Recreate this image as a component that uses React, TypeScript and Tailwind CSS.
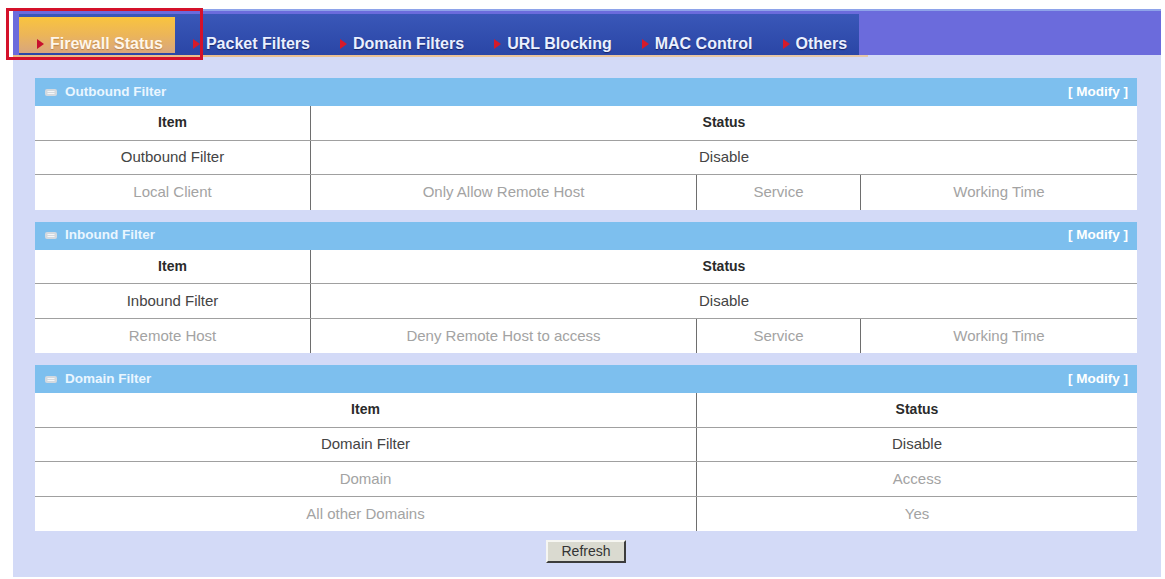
import React from "react";

const Marker = ({ active }: { active?: boolean }) => (
  <svg width="7" height="10" viewBox="0 0 7 10" className="mb-[4px] shrink-0">
    <polygon points="0,0 7,5 0,10" fill={active ? "#c8102e" : "#d61a2a"} />
  </svg>
);

const tabs = ["Firewall Status", "Packet Filters", "Domain Filters", "URL Blocking", "MAC Control", "Others"];

const SectionHeader = ({ title }: { title: string }) => (
  <div className="h-[28px] bg-[#7dbfee] flex items-center justify-between pl-[10px] pr-[9px]">
    <div className="flex items-center gap-[8px]">
      <svg width="12" height="7" viewBox="0 0 12 7">
        <rect x="0" y="0" width="12" height="7" rx="2" fill="#d3d9df" />
        <line x1="2.5" y1="2.5" x2="9.5" y2="2.5" stroke="#f4f6f8" strokeWidth="1" />
        <line x1="2.5" y1="4.5" x2="9.5" y2="4.5" stroke="#f4f6f8" strokeWidth="1" />
      </svg>
      <span className="text-[13.5px] font-bold text-[#eaf6ff]">{title}</span>
    </div>
    <span className="text-[13.5px] font-bold text-white">[ Modify ]</span>
  </div>
);

const rowCls = "h-[34.5px] grid border-b border-[#a0a0a0]";
const lastRowCls = "h-[34.5px] grid";
const cell = "flex items-center justify-center";
const vl = "border-l border-[#6e6e6e]";

const FilterTable = ({ name, a, b }: { name: string; a: string; b: string }) => (
  <div className="bg-white">
    <div className={`${rowCls} grid-cols-[275px_1fr]`}>
      <div className={`${cell} font-bold text-[14px] text-[#2a2a2a]`}>Item</div>
      <div className={`${cell} ${vl} font-bold text-[14px] text-[#2a2a2a]`}>Status</div>
    </div>
    <div className={`${rowCls} grid-cols-[275px_1fr]`}>
      <div className={`${cell} text-[15px] text-[#444]`}>{name}</div>
      <div className={`${cell} ${vl} text-[15px] text-[#444]`}>Disable</div>
    </div>
    <div className={`${lastRowCls} grid-cols-[275px_386px_164px_1fr] text-[15px] text-[#a3a3a3]`}>
      <div className={cell}>{a}</div>
      <div className={`${cell} ${vl}`}>{b}</div>
      <div className={`${cell} ${vl}`}>Service</div>
      <div className={`${cell} ${vl}`}>Working Time</div>
    </div>
  </div>
);

export default function App() {
  return (
    <div className="w-[1165px] h-[579px] bg-white relative overflow-hidden font-['Liberation_Sans',Arial,sans-serif]">
      <div className="pt-[9px] pl-[13px] pr-[4px]">
        <div className="bg-[#d3daf7] h-[568px] flex flex-col">
          {/* top bar */}
          <div className="h-[46px] bg-[#6b6bdc] border-t-2 border-[#8ea3ea] flex items-end">
            <div className="ml-[6px] h-[41px] bg-gradient-to-b from-[#3a57b8] to-[#2a46a6] flex items-stretch">
              {tabs.map((t, i) =>
                i === 0 ? (
                  <div
                    key={t}
                    className="mt-[3px] mb-[2px] bg-gradient-to-b from-[#f9c43c] via-[#ecb558] to-[#d8a67c] flex items-end gap-[6px] pl-[18px] pr-[12px]"
                  >
                    <Marker active />
                    <span className="text-[16px] leading-[18px] font-bold text-[#fff6ea] [text-shadow:0_1px_1px_rgba(120,60,0,0.35)]">
                      {t}
                    </span>
                  </div>
                ) : (
                  <div key={t} className="flex items-end gap-[6px] pl-[18px] pr-[12px] pb-[2px]">
                    <Marker />
                    <span className="text-[16px] leading-[18px] font-bold text-[#eaf0ff] [text-shadow:0_1px_1px_rgba(0,0,40,0.5)]">
                      {t}
                    </span>
                  </div>
                )
              )}
            </div>
          </div>
          <div className="h-[2px] w-[855px] bg-gradient-to-r from-[#e9b984] via-[#ecc496] to-[#e6c8a8]" />

          {/* content */}
          <div className="pl-[22px] pr-[24px] pt-[21px] flex flex-col">
            <SectionHeader title="Outbound Filter" />
            <FilterTable name="Outbound Filter" a="Local Client" b="Only Allow Remote Host" />

            <div className="h-[12px]" />
            <SectionHeader title="Inbound Filter" />
            <FilterTable name="Inbound Filter" a="Remote Host" b="Deny Remote Host to access" />

            <div className="h-[12px]" />
            <SectionHeader title="Domain Filter" />
            <div className="bg-white">
              <div className={`${rowCls} grid-cols-[661px_1fr]`}>
                <div className={`${cell} font-bold text-[14px] text-[#2a2a2a]`}>Item</div>
                <div className={`${cell} ${vl} font-bold text-[14px] text-[#2a2a2a]`}>Status</div>
              </div>
              <div className={`${rowCls} grid-cols-[661px_1fr] text-[15px] text-[#444]`}>
                <div className={cell}>Domain Filter</div>
                <div className={`${cell} ${vl}`}>Disable</div>
              </div>
              <div className={`${rowCls} grid-cols-[661px_1fr] text-[15px] text-[#a3a3a3]`}>
                <div className={cell}>Domain</div>
                <div className={`${cell} ${vl}`}>Access</div>
              </div>
              <div className={`${lastRowCls} grid-cols-[661px_1fr] text-[15px] text-[#a3a3a3]`}>
                <div className={cell}>All other Domains</div>
                <div className={`${cell} ${vl}`}>Yes</div>
              </div>
            </div>

            <div className="mt-[9px] flex justify-center">
              <button className="w-[80px] h-[23px] bg-[#dadad0] border-2 border-t-[#f6f6f2] border-l-[#f6f6f2] border-b-[#3c3c3c] border-r-[#3c3c3c] text-[14px] text-[#333] flex items-center justify-center">
                Refresh
              </button>
            </div>
          </div>
        </div>
      </div>

      {/* annotation highlight */}
      <div className="absolute left-[6px] top-[8px] w-[197px] h-[52px] border-[3px] border-[#d4112a]" />
    </div>
  );
}
